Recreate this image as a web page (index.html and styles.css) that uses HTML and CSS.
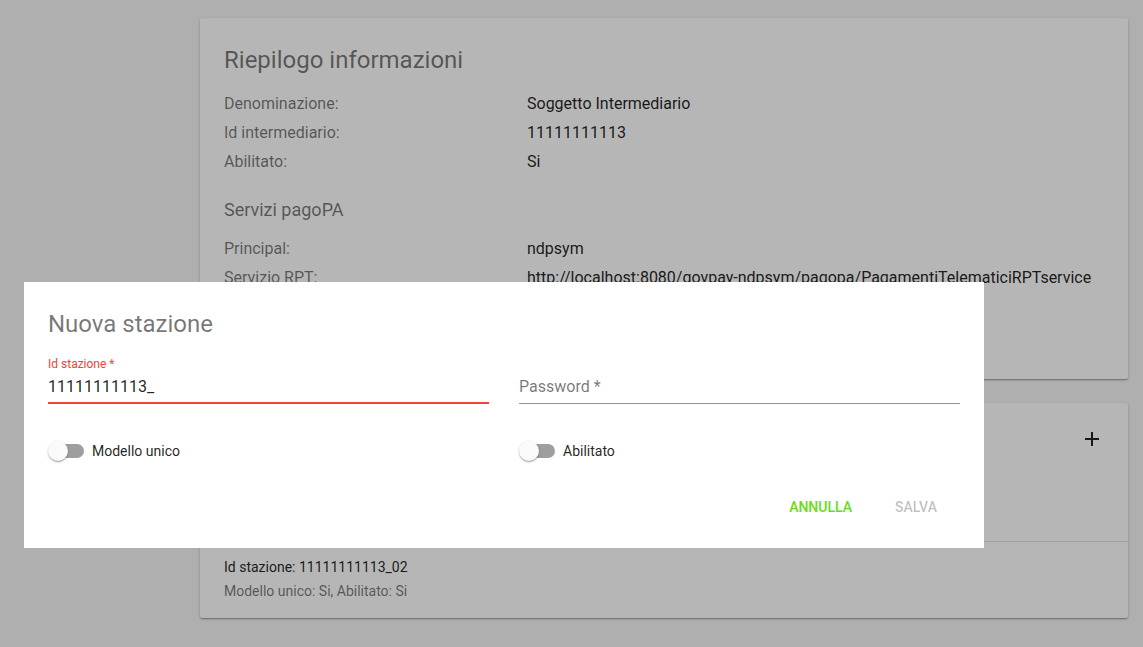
FILE: index.html
```html
<!DOCTYPE html>
<html lang="it">
<head>
<meta charset="utf-8">
<title>Intermediario</title>
<link rel="stylesheet" href="styles.css">
</head>
<body>
<main class="page">
  <section class="card summary">
    <h1 class="card-title">Riepilogo informazioni</h1>
    <dl class="info">
      <dt>Denominazione:</dt><dd>Soggetto Intermediario</dd>
      <dt>Id intermediario:</dt><dd>11111111113</dd>
      <dt>Abilitato:</dt><dd>Si</dd>
    </dl>
    <h2 class="sub-title">Servizi pagoPA</h2>
    <dl class="info">
      <dt>Principal:</dt><dd>ndpsym</dd>
      <dt>Servizio RPT:</dt><dd>http://localhost:8080/govpay-ndpsym/pagopa/PagamentiTelematiciRPTservice</dd>
    </dl>
  </section>

  <section class="card stations">
    <header class="stations-head">
      <h2 class="stations-title">Stazioni</h2>
      <button class="icon-btn" type="button" aria-label="Aggiungi">
        <svg width="24" height="24" viewBox="0 0 24 24"><path d="M19 13h-6v6h-2v-6H5v-2h6V5h2v6h6v2z" fill="#222"/></svg>
      </button>
    </header>
    <div class="station">
      <div class="station-id">Id stazione: 11111111113_01</div>
      <div class="station-meta">Modello unico: Si, Abilitato: Si</div>
    </div>
    <div class="station">
      <div class="station-id">Id stazione: 11111111113_02</div>
      <div class="station-meta">Modello unico: Si, Abilitato: Si</div>
    </div>
  </section>
</main>

<div class="backdrop"></div>

<div class="dialog" role="dialog">
  <h2 class="dialog-title">Nuova stazione</h2>
  <div class="fields">
    <label class="field field-error">
      <span class="field-label">Id stazione *</span>
      <span class="field-input">11111111113_</span>
    </label>
    <label class="field">
      <span class="field-label">&nbsp;</span>
      <span class="field-input placeholder">Password *</span>
    </label>
    <div class="toggle">
      <span class="switch"><span class="track"></span><span class="thumb"></span></span>
      <span class="toggle-label">Modello unico</span>
    </div>
    <div class="toggle">
      <span class="switch"><span class="track"></span><span class="thumb"></span></span>
      <span class="toggle-label">Abilitato</span>
    </div>
  </div>
  <div class="actions">
    <button class="btn btn-primary" type="button">Annulla</button>
    <button class="btn btn-disabled" type="button">Salva</button>
  </div>
</div>
</body>
</html>
```

FILE: styles.css
```css
* { box-sizing: border-box; }

html, body {
  margin: 0;
  height: 100%;
}

body {
  background: #f5f5f5;
  font-family: Roboto, "Liberation Sans", sans-serif;
  color: rgba(0, 0, 0, 0.87);
  overflow: hidden;
}

.page {
  width: 928px;
  margin-left: 200px;
  padding-top: 18px;
  display: flex;
  flex-direction: column;
  gap: 24px;
}

.card {
  background: #fff;
  border-radius: 2px;
  box-shadow: 0 1px 3px rgba(0,0,0,0.2), 0 1px 1px rgba(0,0,0,0.14), 0 2px 1px -1px rgba(0,0,0,0.12);
}

.summary {
  height: 361px;
  padding: 24px;
}

.card-title {
  margin: 0;
  font-size: 24px;
  line-height: 36px;
  font-weight: 400;
  color: rgba(0, 0, 0, 0.54);
}

.info {
  display: grid;
  grid-template-columns: 303px 1fr;
  margin: 11px 0 0;
  font-size: 16px;
  line-height: 29px;
}

.info dt {
  color: rgba(0, 0, 0, 0.54);
}

.info dd {
  margin: 0;
  color: rgba(0, 0, 0, 0.87);
  white-space: nowrap;
}

.sub-title {
  margin: 20px 0 0;
  font-size: 18px;
  line-height: 28px;
  font-weight: 400;
  color: rgba(0, 0, 0, 0.54);
}

.sub-title + .info {
  margin-top: 10px;
}

.stations {
  height: 215px;
}

.stations-head {
  height: 72px;
  display: flex;
  align-items: center;
  justify-content: space-between;
  padding: 0 24px;
}

.stations-title {
  margin: 0;
  font-size: 20px;
  font-weight: 400;
  color: rgba(0, 0, 0, 0.54);
}

.icon-btn {
  width: 48px;
  height: 48px;
  margin-right: -12px;
  border: 0;
  background: none;
  padding: 0;
  display: flex;
  align-items: center;
  justify-content: center;
}

.station {
  padding: 13px 24px;
  font-size: 14px;
  line-height: 24px;
}

.station + .station {
  border-top: 1px solid rgba(0, 0, 0, 0.12);
}

.station:first-of-type {
  padding-top: 5px;
}

.station-id {
  color: rgba(0, 0, 0, 0.87);
}

.station-meta {
  color: rgba(0, 0, 0, 0.54);
}

.backdrop {
  position: fixed;
  inset: 0;
  background: rgba(0, 0, 0, 0.286);
}

.dialog {
  position: fixed;
  left: 24px;
  top: 282px;
  width: 960px;
  height: 266px;
  background: #fff;
  padding: 24px 24px 0;
}

.dialog-title {
  margin: 0;
  font-size: 24px;
  line-height: 36px;
  font-weight: 400;
  color: rgba(0, 0, 0, 0.54);
}

.fields {
  display: grid;
  grid-template-columns: 441px 441px;
  column-gap: 30px;
  margin-top: 15px;
}

.field {
  display: flex;
  flex-direction: column;
  border-bottom: 1px solid rgba(0, 0, 0, 0.42);
  height: 47px;
}

.field-error {
  border-bottom: 2px solid #f44336;
}

.field-label {
  font-size: 12px;
  line-height: 14px;
  color: #f44336;
}

.field-input {
  margin-top: 6px;
  font-size: 16px;
  line-height: 20px;
  color: rgba(0, 0, 0, 0.87);
}

.placeholder {
  color: rgba(0, 0, 0, 0.54);
}

.toggle {
  display: flex;
  align-items: center;
  height: 48px;
  margin-top: 23px;
}

.switch {
  position: relative;
  width: 36px;
  height: 20px;
  margin-right: 8px;
}

.track {
  position: absolute;
  left: 2px;
  top: 3px;
  width: 34px;
  height: 14px;
  border-radius: 7px;
  background: #9e9e9e;
}

.thumb {
  position: absolute;
  left: 0;
  top: 0;
  width: 20px;
  height: 20px;
  border-radius: 50%;
  background: #fafafa;
  box-shadow: 0 1px 3px rgba(0,0,0,0.2), 0 1px 1px rgba(0,0,0,0.14), 0 2px 1px -1px rgba(0,0,0,0.12);
}

.toggle-label {
  font-size: 14px;
  color: rgba(0, 0, 0, 0.87);
}

.actions {
  display: flex;
  justify-content: flex-end;
  gap: 4px;
  margin-top: 14px;
}

.btn {
  min-width: 88px;
  height: 36px;
  padding: 0 16px;
  border: 0;
  background: none;
  font-family: Roboto, "Liberation Sans", sans-serif;
  font-size: 14px;
  font-weight: 500;
  text-transform: uppercase;
}

.btn-primary {
  color: #64dd17;
}

.btn-disabled {
  color: rgba(0, 0, 0, 0.26);
}
```
